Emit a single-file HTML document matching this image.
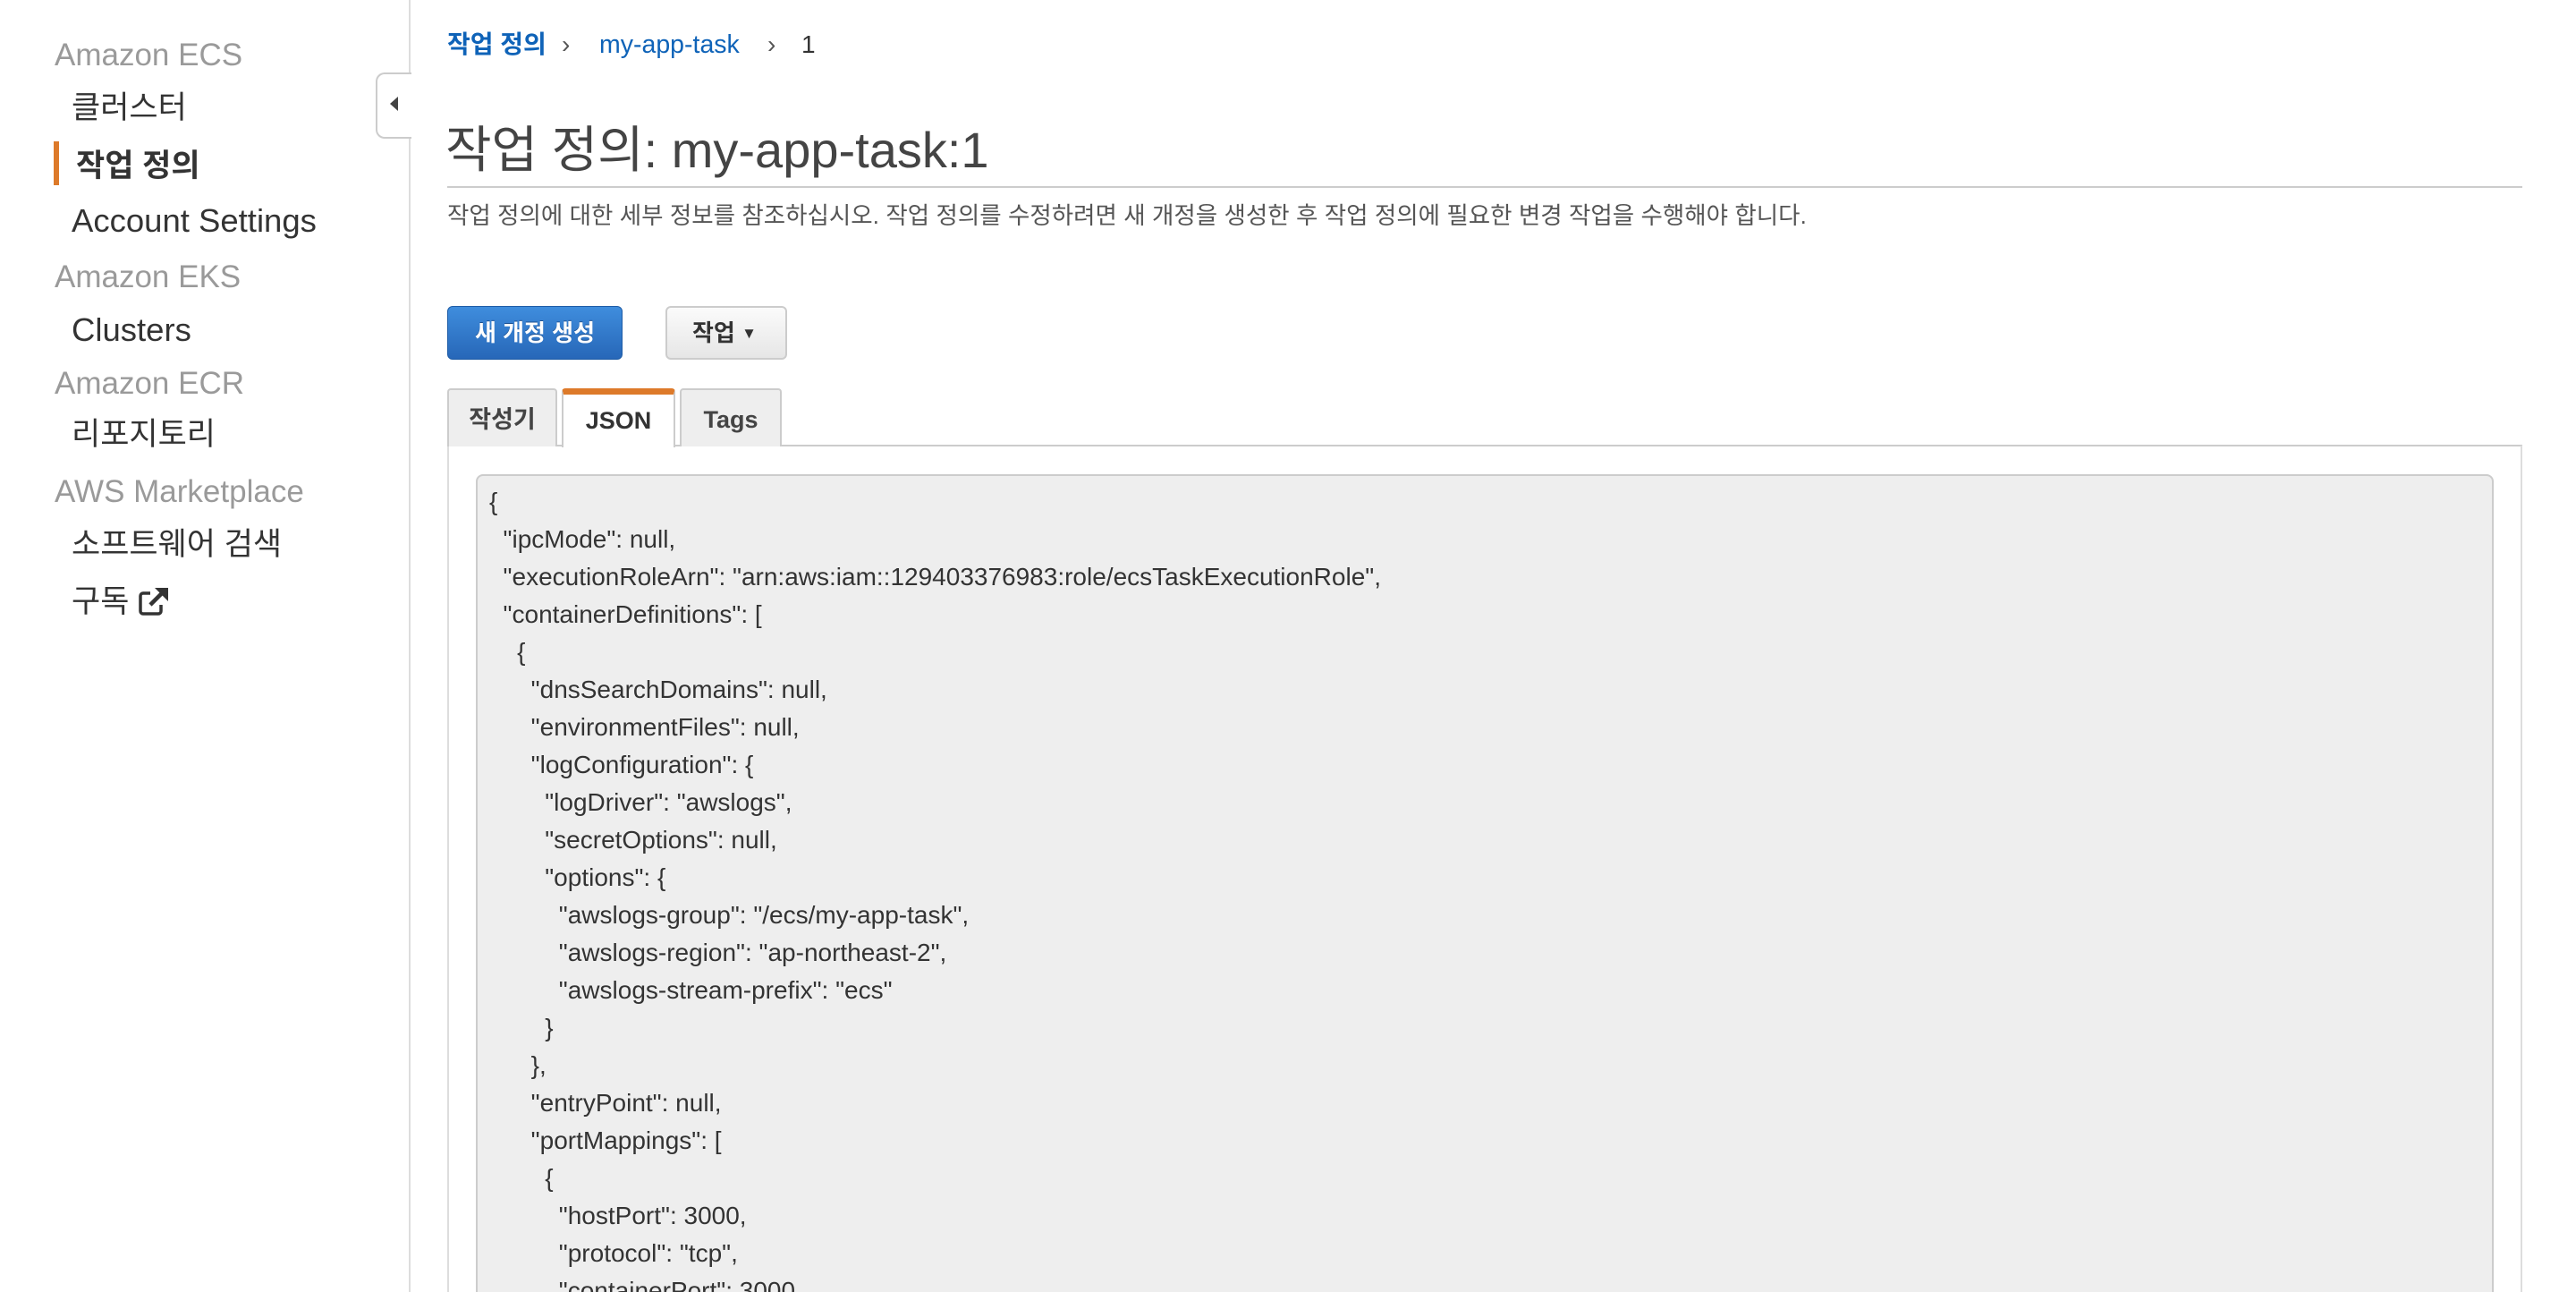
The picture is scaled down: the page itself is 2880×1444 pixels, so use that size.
<!DOCTYPE html>
<html><head><meta charset="utf-8"><style>
*{margin:0;padding:0;box-sizing:border-box}
html,body{width:2880px;height:1444px;overflow:hidden}
body{background:#fff;font-family:"Liberation Sans","Noto Sans CJK KR",sans-serif;position:relative;color:#333}
.a{position:absolute;white-space:nowrap;line-height:1}
.h{color:#9a9a9a;font-size:35px}
.n{color:#333;font-size:35px}
.e{font-size:36.5px}
pre{position:absolute;left:547px;top:540px;height:904px;overflow:hidden;font-family:"Liberation Sans","Noto Sans CJK KR",sans-serif;font-size:28px;line-height:42px;color:#333}
</style></head><body>
<div style="position:absolute;left:457px;top:0;width:2px;height:1444px;background:#ddd"></div>
<div style="position:absolute;left:420px;top:81px;width:40px;height:74px;background:#fff;border:2px solid #ccc;border-right:none;border-radius:10px 0 0 10px"></div>
<div style="position:absolute;left:436px;top:108px;width:0;height:0;border-top:8px solid transparent;border-bottom:8px solid transparent;border-right:9px solid #444"></div>
<div class="a h" style="left:61px;top:44px">Amazon ECS</div>
<div class="a n" style="left:80px;top:103px">클러스터</div>
<div style="position:absolute;left:60px;top:158px;width:6px;height:49px;background:#dd7a2a"></div>
<div class="a n" style="left:85px;top:168px;font-weight:bold">작업 정의</div>
<div class="a n e" style="left:80px;top:229px">Account Settings</div>
<div class="a h" style="left:61px;top:292px">Amazon EKS</div>
<div class="a n e" style="left:80px;top:351px">Clusters</div>
<div class="a h" style="left:61px;top:411px">Amazon ECR</div>
<div class="a n" style="left:80px;top:468px">리포지토리</div>
<div class="a h" style="left:61px;top:532px">AWS Marketplace</div>
<div class="a n" style="left:80px;top:591px">소프트웨어 검색</div>
<div class="a n" style="left:80px;top:655px">구독</div>
<svg style="position:absolute;left:154px;top:655px" width="36" height="34" viewBox="0 0 36 34"><path d="M14 8H6a3 3 0 0 0-3 3v17a3 3 0 0 0 3 3h17a3 3 0 0 0 3-3v-7" fill="none" stroke="#333" stroke-width="3.5"/><path d="M14 21L30 5" stroke="#333" stroke-width="4.5"/><path d="M19 2h15v15z" fill="#333"/></svg>
<div class="a" style="left:500px;top:36px;font-size:28px;color:#0f63b8;font-weight:bold">작업 정의</div>
<div class="a" style="left:628px;top:36px;font-size:28px;color:#555">›</div>
<div class="a" style="left:670px;top:36px;font-size:28.5px;color:#0f63b8">my-app-task</div>
<div class="a" style="left:858px;top:36px;font-size:28px;color:#555">›</div>
<div class="a" style="left:896px;top:36px;font-size:28px;color:#333">1</div>
<div class="a" style="left:498px;top:140px;font-size:56px;color:#444">작업 정의: my-app-task:1</div>
<div style="position:absolute;left:500px;top:208px;width:2320px;height:2px;background:#ccc"></div>
<div class="a" style="left:500px;top:228px;font-size:26.5px;color:#555">작업 정의에 대한 세부 정보를 참조하십시오. 작업 정의를 수정하려면 새 개정을 생성한 후 작업 정의에 필요한 변경 작업을 수행해야 합니다.</div>
<div style="position:absolute;left:500px;top:342px;width:196px;height:60px;border-radius:6px;background:linear-gradient(#3f8ddd,#2767b8);border:1px solid #1e5ca6;color:#fff;font-weight:bold;font-size:26px;text-align:center;line-height:58px;text-shadow:0 -1px 0 #1a4f90">새 개정 생성</div>
<div style="position:absolute;left:744px;top:342px;width:136px;height:60px;border-radius:6px;background:linear-gradient(#fbfbfb,#e6e6e6);border:2px solid #ccc;color:#333;font-weight:bold;font-size:26px;line-height:56px;padding-left:28px">작업 <span style="font-size:17px;vertical-align:3px">▼</span></div>
<div style="position:absolute;left:500px;top:497px;width:2320px;height:2px;background:#ccc"></div>
<div style="position:absolute;left:500px;top:498px;width:2px;height:946px;background:#ddd"></div>
<div style="position:absolute;left:2818px;top:498px;width:2px;height:946px;background:#ddd"></div>
<div style="position:absolute;left:500px;top:434px;width:123px;height:65px;background:#eee;border:2px solid #ccc;border-bottom:none;border-radius:4px 4px 0 0;font-size:27px;font-weight:bold;color:#444;text-align:center;line-height:66px">작성기</div>
<div style="position:absolute;left:628px;top:434px;width:127px;height:66px;background:#fff;border:2px solid #ccc;border-top:7px solid #dd7a2a;border-bottom:none;border-radius:4px 4px 0 0;font-size:27px;font-weight:bold;color:#333;text-align:center;line-height:58px">JSON</div>
<div style="position:absolute;left:760px;top:434px;width:114px;height:65px;background:#eee;border:2px solid #ccc;border-bottom:none;border-radius:4px 4px 0 0;font-size:27px;font-weight:bold;color:#444;text-align:center;line-height:66px">Tags</div>
<div style="position:absolute;left:532px;top:530px;width:2256px;height:914px;background:#eee;border:2px solid #ccc;border-bottom:none;border-radius:8px 8px 0 0"></div>
<pre>{
  "ipcMode": null,
  "executionRoleArn": "arn:aws:iam::129403376983:role/ecsTaskExecutionRole",
  "containerDefinitions": [
    {
      "dnsSearchDomains": null,
      "environmentFiles": null,
      "logConfiguration": {
        "logDriver": "awslogs",
        "secretOptions": null,
        "options": {
          "awslogs-group": "/ecs/my-app-task",
          "awslogs-region": "ap-northeast-2",
          "awslogs-stream-prefix": "ecs"
        }
      },
      "entryPoint": null,
      "portMappings": [
        {
          "hostPort": 3000,
          "protocol": "tcp",
          "containerPort": 3000,</pre>
</body></html>
